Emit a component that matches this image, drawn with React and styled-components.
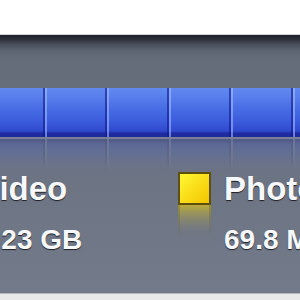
import React from "react";
import styled, { createGlobalStyle } from "styled-components";

const GlobalStyle = createGlobalStyle`
  html, body {
    margin: 0;
    padding: 0;
    background: #ffffff;
  }
`;

const Page = styled.div`
  width: 300px;
  height: 300px;
  overflow: hidden;
  display: flex;
  flex-direction: column;
  background: #ffffff;
  font-family: "Liberation Sans", Arial, sans-serif;
`;

const Blank = styled.div`
  height: 34px;
  flex: none;
  background: #ffffff;
`;

const Panel = styled.div`
  flex: none;
  height: 258px;
  display: flex;
  flex-direction: column;
  border-top: 1px solid #d2d3d6;
  background: linear-gradient(
    180deg,
    #1e2127 0px,
    #2a2e36 4px,
    #464c58 9px,
    #5b6270 15px,
    #646b79 22px,
    #666d7b 53px,
    #6b7282 120px,
    #737a8a 258px
  );
`;

const Header = styled.div`
  height: 53px;
  flex: none;
`;

const Bar = styled.div`
  height: 49px;
  flex: none;
  display: flex;
  overflow: hidden;
  background: linear-gradient(
    180deg,
    #6189ef 0%,
    #567deb 20%,
    #466ae4 45%,
    #3a5adb 70%,
    #2f49cd 88%,
    #1f2ca2 92%,
    #1d2a9a 100%
  );
`;

const Segment = styled.div`
  flex: none;
  width: 58px;
  margin-left: ${({ $first }) => ($first ? "-17px" : "0")};
  border-left: 2px solid rgba(170, 195, 255, 0.55);
  border-right: 2px solid rgba(15, 25, 140, 0.6);
`;

const Rim = styled.div`
  height: 2px;
  flex: none;
  background: #7a8192;
`;

const Reflection = styled(Bar)`
  height: 33px;
  opacity: 0.3;
  transform: scaleY(-1);
  -webkit-mask-image: linear-gradient(0deg, #000 0%, transparent 100%);
  mask-image: linear-gradient(0deg, #000 0%, transparent 100%);
`;

const Legend = styled.div`
  display: flex;
  margin-left: -68px;
`;

const Item = styled.div`
  flex: none;
  width: 246px;
  display: flex;
  gap: 13px;
`;

const SwatchColumn = styled.div`
  display: flex;
  flex-direction: column;
  flex: none;
`;

const Swatch = styled.div`
  width: 29px;
  height: 29px;
  border: 2px solid #5e4f0c;
  background: ${({ $from, $to }) =>
    `linear-gradient(135deg, ${$from} 0%, ${$to} 100%)`};
`;

const SwatchShine = styled.div`
  width: 29px;
  height: 32px;
  border: 2px solid rgba(94, 79, 12, 0.3);
  border-top: none;
  background: ${({ $tint }) =>
    `linear-gradient(180deg, ${$tint} 0%, transparent 100%)`};
  -webkit-mask-image: linear-gradient(180deg, #000 0%, transparent 100%);
  mask-image: linear-gradient(180deg, #000 0%, transparent 100%);
`;

const Text = styled.div`
  display: flex;
  flex-direction: column;
  color: #f7f8fb;
  text-shadow: 0 1px 1px rgba(0, 0, 0, 0.75);
  white-space: nowrap;
`;

const Name = styled.div`
  font-size: 33px;
  line-height: 34px;
  font-weight: bold;
`;

const Size = styled.div`
  margin-top: 20px;
  font-size: 28px;
  line-height: 28px;
  font-weight: bold;
`;

const Fill = styled.div`
  flex: 1;
`;

const Foot = styled.div`
  flex: 1;
  border-top: 1px solid #b4b6bb;
  background: #e9e9ea;
`;

const segments = [0, 1, 2, 3, 4, 5];

const items = [
  { name: "Video", size: "5.23 GB", from: "#b07cf0", to: "#7a45d8", tint: "rgba(140, 90, 220, 0.7)" },
  { name: "Photos", size: "69.8 MB", from: "#fff832", to: "#f4c400", tint: "rgba(205, 185, 40, 0.8)" },
];

const App = () => {
  return (
    <>
      <GlobalStyle />
      <Page>
        <Blank />
        <Panel>
          <Header />
          <Bar>
            {segments.map((key) => (
              <Segment key={key} $first={key === 0} />
            ))}
          </Bar>
          <Rim />
          <Reflection>
            {segments.map((key) => (
              <Segment key={key} $first={key === 0} />
            ))}
          </Reflection>
          <Legend>
            {items.map((item) => (
              <Item key={item.name}>
                <SwatchColumn>
                  <Swatch $from={item.from} $to={item.to} />
                  <SwatchShine $tint={item.tint} />
                </SwatchColumn>
                <Text>
                  <Name>{item.name}</Name>
                  <Size>{item.size}</Size>
                </Text>
              </Item>
            ))}
          </Legend>
          <Fill />
        </Panel>
        <Foot />
      </Page>
    </>
  );
};

export default App;
